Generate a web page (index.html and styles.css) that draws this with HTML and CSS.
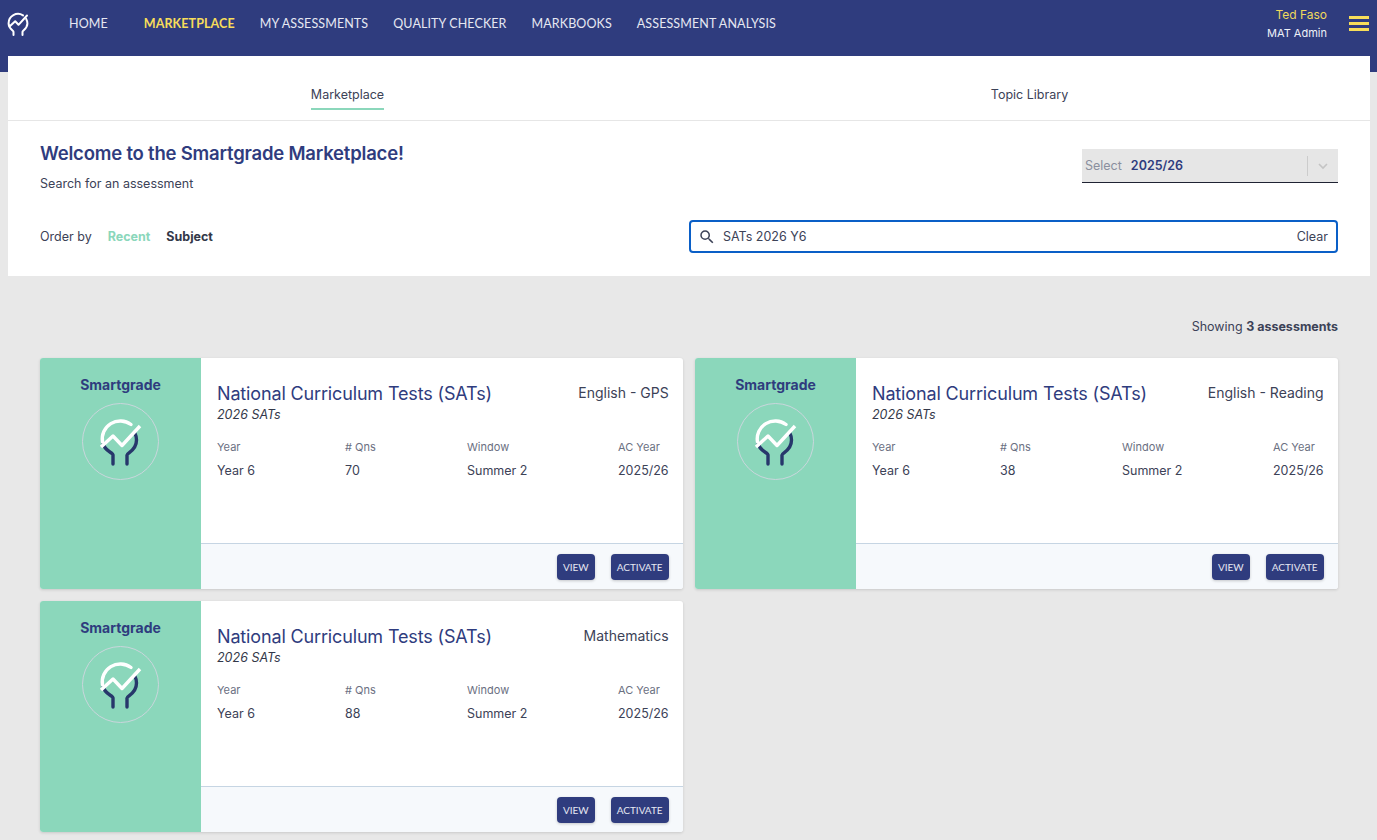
FILE: index.html
```html
<!DOCTYPE html>
<html lang="en">
<head>
    <meta charset="UTF-8">
    <meta name="viewport" content="width=device-width, initial-scale=1.0">
    <title>Smartgrade Marketplace</title>
    <link rel="stylesheet" href="styles.css">
</head>
<body>
    <header class="topbar">
        <a class="topbar-logo" href="#" aria-label="Smartgrade">
            <svg width="22" height="24" viewBox="0 0 22 24" fill="none" stroke="#fff" stroke-width="2" stroke-linecap="round" stroke-linejoin="round">
                <path d="M6.5 23v-3.2c0-1.2-4.9-3.2-4.9-8.3A9.4 9.4 0 0 1 16 3.4"/>
                <path d="M15.5 23v-3.2c0-1.2 4.9-3.2 4.9-8.3 0-2-.5-3.4-1.2-4.6"/>
                <path d="M2.5 14.5l5.7-5.3 3.3 3.6 8.5-9.3"/>
            </svg>
        </a>
        <nav class="topbar-nav">
            <a class="nav-link nav-home" href="#">HOME</a>
            <a class="nav-link nav-active" href="#">MARKETPLACE</a>
            <a class="nav-link" href="#">MY ASSESSMENTS</a>
            <a class="nav-link" href="#">QUALITY CHECKER</a>
            <a class="nav-link" href="#">MARKBOOKS</a>
            <a class="nav-link" href="#">ASSESSMENT ANALYSIS</a>
        </nav>
        <div class="topbar-user">
            <span class="user-name">Ted Faso</span>
            <span class="user-role">MAT Admin</span>
        </div>
        <button class="burger" type="button" aria-label="Menu"><span></span><span></span><span></span></button>
    </header>

    <main class="page">
        <section class="panel">
            <div class="tabs">
                <div class="tab-cell"><a class="tab tab-active" href="#">Marketplace</a></div>
                <div class="tab-cell"><a class="tab" href="#">Topic Library</a></div>
            </div>
            <div class="intro">
                <div class="intro-row">
                    <div>
                        <h1 class="intro-title">Welcome to the Smartgrade Marketplace!</h1>
                        <p class="intro-sub">Search for an assessment</p>
                    </div>
                    <div class="year-select">
                        <span class="year-label">Select</span>
                        <span class="year-value">2025/26</span>
                        <span class="year-divider"></span>
                        <svg class="year-chevron" width="12" height="12" viewBox="0 0 12 12" fill="none" stroke="#c4c4c4" stroke-width="1.6"><path d="M2 4l4 4 4-4"/></svg>
                    </div>
                </div>
                <div class="filter-row">
                    <div class="order">
                        <span class="order-label">Order by</span>
                        <a class="order-link order-recent" href="#">Recent</a>
                        <a class="order-link" href="#">Subject</a>
                    </div>
                    <div class="search">
                        <svg width="18" height="18" viewBox="0 0 24 24" fill="#3c4257"><path d="M15.5 14h-.79l-.28-.27A6.47 6.47 0 0 0 16 9.5 6.5 6.5 0 1 0 9.5 16c1.61 0 3.09-.59 4.23-1.57l.27.28v.79l5 4.99L20.49 19l-4.99-5zm-6 0C7.01 14 5 11.99 5 9.5S7.01 5 9.5 5 14 7.01 14 9.5 11.99 14 9.5 14z"/></svg>
                        <span class="search-text">SATs 2026 Y6</span>
                        <span class="search-clear">Clear</span>
                    </div>
                </div>
            </div>
        </section>

        <section class="results">
            <p class="results-count">Showing <b>3 assessments</b></p>
            <div class="card-grid">

                <article class="card">
                    <div class="card-side">
                        <div class="card-brand">Smartgrade</div>
                        <div class="card-badge">
                            <svg width="46" height="48" viewBox="0 0 46 48" fill="none" stroke-width="3.4" stroke-linecap="round" stroke-linejoin="round">
                                <path d="M15 46V37c0-2.500-9-4-9.800-12" stroke="#27376b"/>
                                <path d="M29 46V37c0-2.500 9.500-4 9.500-15 0-3-.7-5-1.500-6.500" stroke="#27376b"/>
                                <path d="M4.500 24A18 18 0 0 1 33 6.500" stroke="#fff"/>
                                <path d="M3 29L15 18l9 9.500L42 8" stroke="#fff" stroke-linecap="butt"/>
                            </svg>
                        </div>
                    </div>
                    <div class="card-main">
                        <div class="card-body">
                            <div class="card-head">
                                <div>
                                    <h2 class="card-title">National Curriculum Tests (SATs)</h2>
                                    <div class="card-sub">2026 SATs</div>
                                </div>
                                <div class="card-subject">English - GPS</div>
                            </div>
                            <dl class="card-meta">
                                <div class="meta-col meta-year"><dt>Year</dt><dd>Year 6</dd></div>
                                <div class="meta-col meta-qns"><dt># Qns</dt><dd>70</dd></div>
                                <div class="meta-col meta-window"><dt>Window</dt><dd>Summer 2</dd></div>
                                <div class="meta-col meta-ac"><dt>AC Year</dt><dd>2025/26</dd></div>
                            </dl>
                        </div>
                        <div class="card-foot">
                            <button class="btn" type="button">VIEW</button>
                            <button class="btn" type="button">ACTIVATE</button>
                        </div>
                    </div>
                </article>

                <article class="card">
                    <div class="card-side">
                        <div class="card-brand">Smartgrade</div>
                        <div class="card-badge">
                            <svg width="46" height="48" viewBox="0 0 46 48" fill="none" stroke-width="3.4" stroke-linecap="round" stroke-linejoin="round">
                                <path d="M15 46V37c0-2.500-9-4-9.800-12" stroke="#27376b"/>
                                <path d="M29 46V37c0-2.500 9.500-4 9.500-15 0-3-.7-5-1.500-6.500" stroke="#27376b"/>
                                <path d="M4.500 24A18 18 0 0 1 33 6.500" stroke="#fff"/>
                                <path d="M3 29L15 18l9 9.500L42 8" stroke="#fff" stroke-linecap="butt"/>
                            </svg>
                        </div>
                    </div>
                    <div class="card-main">
                        <div class="card-body">
                            <div class="card-head">
                                <div>
                                    <h2 class="card-title">National Curriculum Tests (SATs)</h2>
                                    <div class="card-sub">2026 SATs</div>
                                </div>
                                <div class="card-subject">English - Reading</div>
                            </div>
                            <dl class="card-meta">
                                <div class="meta-col meta-year"><dt>Year</dt><dd>Year 6</dd></div>
                                <div class="meta-col meta-qns"><dt># Qns</dt><dd>38</dd></div>
                                <div class="meta-col meta-window"><dt>Window</dt><dd>Summer 2</dd></div>
                                <div class="meta-col meta-ac"><dt>AC Year</dt><dd>2025/26</dd></div>
                            </dl>
                        </div>
                        <div class="card-foot">
                            <button class="btn" type="button">VIEW</button>
                            <button class="btn" type="button">ACTIVATE</button>
                        </div>
                    </div>
                </article>

                <article class="card">
                    <div class="card-side">
                        <div class="card-brand">Smartgrade</div>
                        <div class="card-badge">
                            <svg width="46" height="48" viewBox="0 0 46 48" fill="none" stroke-width="3.4" stroke-linecap="round" stroke-linejoin="round">
                                <path d="M15 46V37c0-2.500-9-4-9.800-12" stroke="#27376b"/>
                                <path d="M29 46V37c0-2.500 9.500-4 9.500-15 0-3-.7-5-1.500-6.500" stroke="#27376b"/>
                                <path d="M4.500 24A18 18 0 0 1 33 6.500" stroke="#fff"/>
                                <path d="M3 29L15 18l9 9.500L42 8" stroke="#fff" stroke-linecap="butt"/>
                            </svg>
                        </div>
                    </div>
                    <div class="card-main">
                        <div class="card-body">
                            <div class="card-head">
                                <div>
                                    <h2 class="card-title">National Curriculum Tests (SATs)</h2>
                                    <div class="card-sub">2026 SATs</div>
                                </div>
                                <div class="card-subject">Mathematics</div>
                            </div>
                            <dl class="card-meta">
                                <div class="meta-col meta-year"><dt>Year</dt><dd>Year 6</dd></div>
                                <div class="meta-col meta-qns"><dt># Qns</dt><dd>88</dd></div>
                                <div class="meta-col meta-window"><dt>Window</dt><dd>Summer 2</dd></div>
                                <div class="meta-col meta-ac"><dt>AC Year</dt><dd>2025/26</dd></div>
                            </dl>
                        </div>
                        <div class="card-foot">
                            <button class="btn" type="button">VIEW</button>
                            <button class="btn" type="button">ACTIVATE</button>
                        </div>
                    </div>
                </article>

            </div>
        </section>
    </main>
</body>
</html>
```

FILE: styles.css
```css
html, body {
    height: 100%;
    margin: 0;
    overflow: hidden;
}
body {
    font-family: Inter, 'Liberation Sans', sans-serif;
    color: #3c4257;
    background-color: #e8e8e8;
    position: relative;
}
a {
    color: inherit;
    text-decoration: none;
}
body::before {
    content: "";
    display: block;
    height: 72px;
    background-color: #2f3c7e;
    margin-bottom: -72px;
}
.topbar {
    display: flex;
    align-items: flex-start;
    height: 56px;
    background-color: #2f3c7e;
    position: relative;
}
.topbar-logo {
    width: 22px;
    height: 24px;
    margin: 12px 0 0 7px;
}
.topbar-nav {
    display: flex;
    margin: 16px 0 0 40px;
    font-family: Lato, Inter, sans-serif;
    font-size: 12.5px;
    line-height: 16px;
    letter-spacing: 0.1px;
    color: #e6e8f2;
    gap: 25px;
    white-space: nowrap;
}
.nav-home {
    margin-right: 11px;
}
.nav-active {
    color: #f7dd5a;
    font-weight: 700;
}
.topbar-user {
    margin: 7px 0 0 auto;
    display: flex;
    flex-direction: column;
    align-items: flex-end;
    gap: 4px;
    font-size: 11px;
    line-height: 15px;
}
.user-name {
    color: #f0d95c;
    font-size: 12px;
}
.user-role {
    color: #eef0f7;
}
.burger {
    display: flex;
    flex-direction: column;
    gap: 3px;
    width: 20px;
    margin: 16px 8px 0 22px;
    padding: 0;
    border: none;
    background: none;
}
.burger span {
    display: block;
    height: 3px;
    background-color: #f7dd5a;
}
.page {
    margin: 0 7px 0 8px;
    position: relative;
}
.panel {
    background-color: #fff;
    height: 220px;
}
.tabs {
    display: grid;
    grid-template-columns: 1fr 1fr;
    height: 64px;
    border-bottom: 1px solid #e6e6e6;
}
.tab-cell {
    text-align: center;
    padding-top: 27px;
}
.tab {
    display: inline-block;
    font-size: 12.5px;
    line-height: 17px;
    padding-bottom: 5px;
    color: #3c4257;
}
.tab-cell:first-child .tab {
    margin-left: -2px;
}
.tab-active {
    border-bottom: 2px solid #8bd7bb;
}
.intro {
    padding: 0 32px;
}
.intro-row {
    display: flex;
    justify-content: space-between;
    align-items: flex-start;
    padding-top: 20px;
}
.intro-title {
    margin: 0;
    font-size: 18.5px;
    line-height: 24px;
    font-weight: 600;
    letter-spacing: -0.2px;
    color: #2f3c7e;
}
.intro-sub {
    margin: 10px 0 0;
    font-size: 12.5px;
    line-height: 17px;
}
.year-select {
    display: flex;
    align-items: center;
    box-sizing: border-box;
    width: 256px;
    height: 34px;
    margin-top: 8px;
    padding: 0 9px 0 3px;
    background-color: #e6e6e6;
    border-bottom: 1px solid #1f2333;
    font-size: 12.5px;
}
.year-label {
    color: #8a8f9e;
}
.year-value {
    margin-left: 9px;
    font-weight: 600;
    color: #2f3c7e;
}
.year-divider {
    width: 1px;
    height: 20px;
    margin: 0 9px 0 auto;
    background-color: #cccccc;
}
.filter-row {
    display: flex;
    justify-content: space-between;
    align-items: center;
    margin-top: 28px;
}
.order {
    display: flex;
    align-items: center;
    font-size: 12.5px;
}
.order-label {
    margin-right: 16px;
}
.order-link {
    margin-right: 16px;
    font-weight: 700;
    color: #333849;
}
.order-recent {
    color: #8bd7bb;
}
.search {
    display: flex;
    align-items: center;
    box-sizing: border-box;
    width: 649px;
    height: 33px;
    padding: 0 8px 0 7px;
    border: 2px solid #0a5fc7;
    border-radius: 4px;
    font-size: 12.5px;
}
.search-text {
    margin-left: 7px;
}
.search-clear {
    margin-left: auto;
}
.results {
    padding: 43px 32px 0;
}
.results-count {
    margin: 0 0 23px;
    text-align: right;
    font-size: 12.5px;
    line-height: 16px;
}
.card-grid {
    display: grid;
    grid-template-columns: 643px 643px;
    grid-auto-rows: 231px;
    column-gap: 12px;
    row-gap: 12px;
}
.card {
    display: flex;
    border-radius: 3px;
    overflow: hidden;
    background-color: #fff;
    box-shadow: 0 1px 3px rgba(0,0,0,0.14);
}
.card-side {
    flex: 0 0 161px;
    background-color: #8bd7bb;
    text-align: center;
}
.card-brand {
    margin-top: 18px;
    font-size: 14px;
    line-height: 18px;
    font-weight: 700;
    color: #2f3c7e;
}
.card-badge {
    display: flex;
    align-items: center;
    justify-content: center;
    box-sizing: border-box;
    width: 77px;
    height: 77px;
    margin: 9px auto 0;
    border: 1px solid #c9d6dc;
    border-radius: 50%;
}
.card-main {
    flex: 1;
    display: flex;
    flex-direction: column;
}
.card-body {
    flex: 1;
    padding: 25px 16px 0;
}
.card-head {
    display: flex;
    justify-content: space-between;
    align-items: flex-start;
}
.card-title {
    margin: 0;
    font-size: 18px;
    line-height: 22px;
    font-weight: 400;
    letter-spacing: -0.15px;
    color: #2f3c7e;
}
.card-sub {
    font-size: 12.5px;
    line-height: 20px;
    font-style: italic;
    color: #333849;
}
.card-subject {
    font-size: 14px;
    line-height: 20px;
}
.card-meta {
    display: flex;
    margin: 14px 0 0;
}
.meta-col {
    flex: none;
}
.meta-year {
    width: 128px;
}
.meta-qns {
    width: 122px;
}
.meta-window {
    width: 151px;
}
.meta-ac {
    margin-left: auto;
}
.meta-col dt {
    font-size: 11px;
    line-height: 16px;
    color: #6b7082;
}
.meta-col dd {
    margin: 8px 0 0;
    font-size: 12.5px;
    line-height: 16px;
}
.card-foot {
    display: flex;
    justify-content: flex-end;
    align-items: center;
    gap: 16px;
    box-sizing: border-box;
    height: 46px;
    padding: 0 16px;
    background-color: #f6f9fc;
    border-top: 1px solid #c6d5e3;
}
.btn {
    height: 26px;
    padding: 0 6px;
    border: none;
    border-radius: 4px;
    background-color: #2f3c7e;
    color: #e6e8f2;
    font-family: Lato, Inter, sans-serif;
    font-size: 10px;
    box-shadow: 0 1px 3px rgba(0,0,0,0.2);
}
```
